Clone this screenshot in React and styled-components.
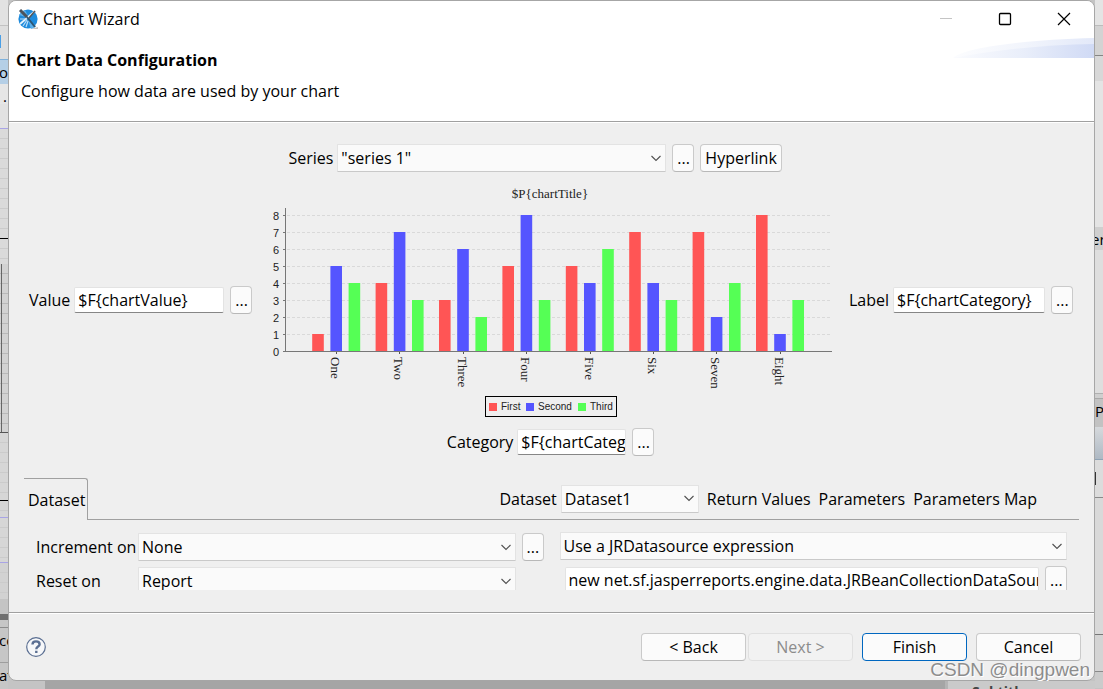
import { useState } from "react";
import styled, { createGlobalStyle, css } from "styled-components";

const GlobalStyle = createGlobalStyle`
  * {
    box-sizing: border-box;
  }
  body {
    margin: 0;
    background: #b4b4b4;
  }
  body, button, input, select {
    font-family: "Open Sans", "Noto Sans", "Noto Sans CJK SC", sans-serif;
    font-size: 16px;
    line-height: 24px;
    color: #000;
  }
`;

const categories = ["One", "Two", "Three", "Four", "Five", "Six", "Seven", "Eight"];
const series = [
  { name: "First", color: "#ff5555", values: [1, 4, 3, 5, 5, 7, 7, 8], legendX: 225 },
  { name: "Second", color: "#5555ff", values: [5, 7, 6, 8, 4, 4, 2, 1], legendX: 262 },
  { name: "Third", color: "#55ff55", values: [4, 3, 2, 3, 6, 3, 4, 3], legendX: 314 },
];

// slices of the editor that stay visible on both sides of the dialog
const leftSlices = [
  { h: 25, bg: "#e2e2e2" },
  { h: 10, bg: "#dedede", line: "#c2c2c2" },
  { h: 13, bg: "#dedede", mark: "#4a9fe6" },
  { h: 11, bg: "#dedede" },
  { h: 25, bg: "#b5cfe6", line: "#7fb2dd", text: "or" },
  { h: 20, bg: "#e6e6e6", text: " ." },
  { h: 24, bg: "#e2e2e2" },
  { h: 110, bg: "#dadada", line: "#a9a4e6", ruled: true },
  { h: 26, bg: "#dadada", line: "#000", ruled: true },
  { h: 168, bg: "#d2d2d2", axis: true, ruled: true },
  { h: 68, bg: "#d6d6d6", line: "#555", ruled: true },
  { h: 17, bg: "#d6d6d6", line: "#000", ruled: true },
  { h: 45, bg: "#d6d6d6", line: "#a9a4e6", ruled: true },
  { h: 37, bg: "#d2d2d2", line: "#a9a4e6", ruled: true },
  { h: 15, bg: "#c4c4c4" },
  { h: 6, bg: "#707070" },
  { h: 7, bg: "#c6c6c6" },
  { h: 35, bg: "#c6c6c6", line: "#8c8c8c", text: "co" },
  { h: 27, bg: "#c6c6c6", line: "#9e9e9e", text: "at" },
];

const rightSlices = [
  { h: 25, bg: "#e4e4e4" },
  { h: 30, bg: "#d3d3d3", line: "#bcbcbc" },
  { h: 26, bg: "#d8d8d8", line: "#858585" },
  { h: 146, bg: "#e4e4e4" },
  { h: 23, bg: "#cfcfcf", text: "er" },
  { h: 143, bg: "#dedede" },
  { h: 5, bg: "#cfcfcf", line: "#b0b0b0" },
  { h: 29, bg: "#c2c2c2", line: "#a8a8a8", text: " P" },
  { h: 32, bg: "linear-gradient(#d6d9dc, #aeb9c4)" },
  { h: 13, bg: "#dcdcdc", line: "#8fa3b5" },
  { h: 13, bg: "#dcdcdc", mark: "#333" },
  { h: 12, bg: "#dcdcdc" },
  { h: 137, bg: "#d9d9d9", line: "#8a8a8a" },
  { h: 37, bg: "#d4d4d4", line: "#777" },
  { h: 17, bg: "#cbcbcb", line: "#8a8a8a" },
];

function Gutter({ slices, right }) {
  return (
    <GutterStyled aria-hidden="true" $right={right}>
      {slices.map((slice, index) => (
        <Slice
          key={index}
          $h={slice.h}
          $bg={slice.bg}
          $line={slice.line}
          $mark={slice.mark}
          $axis={slice.axis}
          $ruled={slice.ruled}
        >
          {slice.text}
        </Slice>
      ))}
    </GutterStyled>
  );
}

function Select({ id, options }) {
  return (
    <SelectStyled>
      <select id={id} aria-label={id}>
        {options.map((option) => (
          <option key={option}>{option}</option>
        ))}
      </select>
      <svg width="12" height="7" viewBox="0 0 12 7" fill="none" stroke="#505050" strokeWidth="1.1">
        <path d="M1.500 1l4.500 4.500L10.500 1" />
      </svg>
    </SelectStyled>
  );
}

function Logo() {
  return (
    <svg width="20" height="20" viewBox="0 0 20 20">
      <path d="M13 20l7-2v2z" fill="#c9c3bd" />
      <circle cx="10" cy="10" r="9.6" fill="#1e8bdc" />
      <path d="M1 6a10 10 0 0 1 6-5l4 8zM10 11l8 6a10 10 0 0 1-5 3z" fill="#5bb0ec" />
      <path d="M2 15L17 2" stroke="#e8f3fb" strokeWidth="1.8" />
      <path d="M2 10l7 0M5 17l4-6M8 18l2-6" stroke="#b9defa" strokeWidth="1.2" />
      <path d="M2 1l7 7" stroke="#4b535b" strokeWidth="3" />
      <path d="M9 8l8 10" stroke="#2e5673" strokeWidth="2" />
      <path d="M11 9l6-7" stroke="#515558" strokeWidth="1.6" />
    </svg>
  );
}

function Chart() {
  const base = 179;
  const unit = 17;
  const step = 63.4;
  return (
    <svg width="573" height="256" viewBox="0 0 573 256" role="img" aria-label="Bar chart">
      <ChartText x="286" y="26" textAnchor="middle" $serif>
        $P{"{chartTitle}"}
      </ChartText>
      {[0, 1, 2, 3, 4, 5, 6, 7, 8].map((tick) => {
        const y = base - tick * unit + 0.5;
        return (
          <g key={tick}>
            {tick > 0 && (
              <path d={`M23 ${y}H568`} stroke="#d9d9d9" strokeDasharray="3 2" />
            )}
            <path d={`M19 ${y}h3`} stroke="#777" />
            <ChartText x="15" y={y + 4} textAnchor="end">
              {tick}
            </ChartText>
          </g>
        );
      })}
      {series.map((serie, s) =>
        serie.values.map((value, i) => (
          <rect
            key={serie.name + i}
            x={48.2 + i * step + s * 18.2}
            y={base - value * unit}
            width="11.6"
            height={value * unit}
            fill={serie.color}
          />
        ))
      )}
      <path d="M21.5 36v143.500H568" fill="none" stroke="#777" />
      {categories.map((name, i) => {
        const x = Math.round(72 + i * step);
        return (
          <g key={name}>
            <path d={`M${x + 0.5} 180v2`} stroke="#555" />
            <ChartText transform={`translate(${x - 5} 185) rotate(90)`} $serif>
              {name}
            </ChartText>
          </g>
        );
      })}
      <rect x="221.500" y="224.500" width="131" height="20" fill="none" stroke="#000" />
      {series.map((serie) => (
        <g key={serie.name}>
          <rect x={serie.legendX} y="231" width="8" height="8" fill={serie.color} />
          <ChartText x={serie.legendX + 12} y="238" $small>
            {serie.name}
          </ChartText>
        </g>
      ))}
    </svg>
  );
}

function ExpressionField({ label, value, width }) {
  const [text, setText] = useState(value);
  return (
    <Field>
      <label htmlFor={label}>{label}</label>
      <TextBox id={label} $width={width} value={text} onChange={(e) => setText(e.target.value)} />
      <Button $dots>...</Button>
    </Field>
  );
}

export default function App() {
  const [expression, setExpression] = useState(
    "new net.sf.jasperreports.engine.data.JRBeanCollectionDataSource"
  );

  return (
    <Desktop>
      <GlobalStyle />
      <Gutter slices={leftSlices} />
      <Dialog>
        <TitleBar>
          <Logo />
          <span>Chart Wizard</span>
          <WindowButton aria-label="Minimize" disabled>
            <svg width="14" height="14" viewBox="0 0 14 14" stroke="#c4c4c4">
              <path d="M1 6.500h12" />
            </svg>
          </WindowButton>
          <WindowButton aria-label="Maximize">
            <svg width="14" height="14" viewBox="0 0 14 14" fill="none" stroke="#000" strokeWidth="1.300">
              <rect x="1.500" y="1.500" width="11" height="11" rx="1" />
            </svg>
          </WindowButton>
          <WindowButton aria-label="Close">
            <svg width="14" height="14" viewBox="0 0 14 14" stroke="#000" strokeWidth="1.200">
              <path d="M1 1l12 12M13 1L1 13" />
            </svg>
          </WindowButton>
        </TitleBar>
        <Header>
          <h1>Chart Data Configuration</h1>
          <p>Configure how data are used by your chart</p>
          <Swoosh width="141" height="20" viewBox="0 0 141 20">
            <defs>
              <linearGradient id="swoosh">
                <stop offset="0" stopColor="#fafbfe" />
                <stop offset="0.500" stopColor="#e9eefa" />
                <stop offset="1" stopColor="#d0daf5" />
              </linearGradient>
            </defs>
            <path d="M0 20C12 9 72 2 141 0v20z" fill="url(#swoosh)" opacity="0.600" />
            <path d="M0 20C40 12 90 7 141 6v14z" fill="url(#swoosh)" />
          </Swoosh>
        </Header>

        <ChartArea>
          <ExpressionField label="Value" value="$F{chartValue}" width={150} />
          <ChartColumn>
            <Field className="series">
              <label htmlFor="series">Series</label>
              <SeriesSelect>
                <Select id="series" options={['"series 1"']} />
              </SeriesSelect>
              <Button $dots>...</Button>
              <Button>Hyperlink</Button>
            </Field>
            <Chart />
            <ExpressionField label="Category" value="$F{chartCategory}" width={109} />
          </ChartColumn>
          <ExpressionField label="Label" value="$F{chartCategory}" width={152} />
        </ChartArea>

        <TabBar>
          <Tab>Dataset</Tab>
          <ToolBar>
            <Field>
              <label htmlFor="dataset">Dataset</label>
              <DatasetSelect>
                <Select id="dataset" options={["Dataset1"]} />
              </DatasetSelect>
            </Field>
            <ToolButton>Return Values</ToolButton>
            <ToolButton>Parameters</ToolButton>
            <ToolButton>Parameters Map</ToolButton>
          </ToolBar>
        </TabBar>
        <Panel>
          <OptionGrid>
            <label htmlFor="increment">Increment on</label>
            <Select id="increment" options={["None", "Report"]} />
            <Button $dots>...</Button>
            <label htmlFor="reset">Reset on</label>
            <Select id="reset" options={["Report", "None"]} />
          </OptionGrid>
          <Source>
            <Select id="source" options={["Use a JRDatasource expression"]} />
            <Field>
              <TextBox
                aria-label="Datasource expression"
                $grow
                value={expression}
                onChange={(e) => setExpression(e.target.value)}
              />
              <Button $dots>...</Button>
            </Field>
          </Source>
        </Panel>

        <Footer>
          <HelpButton aria-label="Help">
            <svg width="20" height="20" viewBox="0 0 20 20" fill="none" stroke="#5b6f92">
              <circle cx="10" cy="10" r="9.300" fill="#f6f7f9" strokeWidth="1.200" />
              <path d="M6.500 7.600C6.500 5.300 8 4.400 10 4.400s3.600 1.100 3.600 3c0 2.200-3.300 2.200-3.300 4.800" strokeWidth="2.400" />
              <path d="M10.300 13.800v2.200" strokeWidth="2.400" />
            </svg>
          </HelpButton>
          <Steps>
            <Button $wide>&lt; Back</Button>
            <Button $wide disabled>
              Next &gt;
            </Button>
          </Steps>
          <Button $wide $primary>
            Finish
          </Button>
          <Button $wide>Cancel</Button>
        </Footer>
      </Dialog>
      <Gutter slices={rightSlices} right />
      <BottomStrip aria-hidden="true">
        <span>Subtitle</span>
      </BottomStrip>
      <Watermark>CSDN @dingpwen</Watermark>
    </Desktop>
  );
}

const Desktop = styled.div`
  position: relative;
  display: grid;
  grid-template-columns: 8px 1fr 8px;
  grid-template-rows: auto 8px;
  background: #c4c4c4;
`;

const GutterStyled = styled.div`
  grid-row: 1 / 3;
  grid-column: ${(props) => (props.$right ? 3 : 1)};
  display: flex;
  flex-direction: column;
  overflow: hidden;
  text-indent: ${(props) => (props.$right ? -4 : -1)}px;
`;

const Slice = styled.div`
  flex: 0 0 ${(props) => props.$h}px;
  overflow: hidden;
  white-space: pre;
  font-size: 15px;
  background: ${(props) => props.$bg};
  border-top: ${(props) => (props.$line ? `1px solid ${props.$line}` : "none")};
  ${(props) =>
    props.$ruled &&
    css`
      background: repeating-linear-gradient(${props.$bg} 0 9px, #cbcbcb 9px 10px);
    `}
  ${(props) =>
    props.$mark &&
    css`
      border-left: 1px solid ${props.$mark};
    `}
  ${(props) =>
    props.$axis &&
    css`
      background: linear-gradient(90deg, transparent 1px, #666 1px 2px, transparent 2px),
        repeating-linear-gradient(${props.$bg} 0 9px, #b9b9b9 9px 10px);
    `}
`;

const Dialog = styled.main`
  grid-row: 1;
  grid-column: 2;
  min-width: 0;
  background: #efefef;
  border: 1px solid #a6a6a6;
  border-radius: 8px;
  overflow: hidden;
`;

const TitleBar = styled.div`
  display: flex;
  align-items: center;
  height: 36px;
  padding: 0 1px 0 9px;
  background: #fff;
  span {
    flex: 1;
    margin-left: 5px;
  }
`;

const WindowButton = styled.button`
  display: grid;
  place-items: center;
  width: 59px;
  height: 36px;
  padding: 0;
  border: 0;
  background: none;
`;

const Header = styled.header`
  position: relative;
  padding: 11px 7px 18px;
  background: #fff;
  border-bottom: 1px solid #a0a0a0;
  h1 {
    margin: 0;
    font-size: 16px;
    font-weight: 700;
  }
  p {
    margin: 7px 5px 0;
  }
`;

const Swoosh = styled.svg`
  position: absolute;
  top: 1px;
  right: 0;
`;

const ChartArea = styled.section`
  display: flex;
  align-items: center;
  justify-content: space-between;
  padding: 21px 21px 22px 20px;
  border-top: 1px solid #fff;
`;

const ChartColumn = styled.div`
  display: flex;
  flex-direction: column;
  align-items: center;
  .series {
    padding-right: 31px;
  }
`;

const ChartText = styled.text`
  font-family: ${(props) =>
    props.$serif ? '"Liberation Serif", serif' : '"Liberation Sans", sans-serif'};
  font-size: ${(props) => (props.$serif ? 13 : props.$small ? 10 : 11)}px;
  fill: #222;
`;

const Field = styled.div`
  display: flex;
  align-items: center;
  gap: 6px;
  height: 28px;
  white-space: nowrap;
  label {
    margin-right: -2px;
  }
`;

const TextBox = styled.input`
  width: ${(props) => props.$width}px;
  flex: ${(props) => (props.$grow ? "1" : "none")};
  min-width: 0;
  height: 26px;
  padding: 0 0 0 3px;
  border: 1px solid #e3e3e3;
  border-bottom-color: #868686;
  border-radius: 2px;
  background: #fff;
  outline: none;
`;

const Button = styled.button`
  height: 28px;
  padding: 0 4px;
  border: 1px solid #cacaca;
  border-bottom-color: #b8b8b8;
  border-radius: 4px;
  background: #fbfbfb;
  ${(props) =>
    props.$dots &&
    css`
      flex: none;
      width: 22px;
    `}
  ${(props) =>
    props.$wide &&
    css`
      width: 105px;
    `}
  ${(props) =>
    props.$primary &&
    css`
      border-color: #0067c0;
    `}
  &:disabled {
    color: #8c8c8c;
    background: #f2f2f2;
    border-color: #e0e0e0;
  }
`;

const SelectStyled = styled.div`
  display: grid;
  align-items: center;
  min-width: 0;
  select {
    grid-area: 1 / 1;
    width: 100%;
    height: 28px;
    padding: 0 20px 0 3px;
    appearance: none;
    border: 1px solid #e3e3e3;
    border-bottom-color: #c9c9c9;
    border-radius: 1px;
    background: #fafafa;
    outline: none;
  }
  svg {
    grid-area: 1 / 1;
    justify-self: end;
    margin-right: 4px;
    pointer-events: none;
  }
`;

const SeriesSelect = styled.div`
  width: 329px;
`;

const DatasetSelect = styled.div`
  width: 138px;
`;

const TabBar = styled.div`
  display: flex;
  height: 42px;
  margin: 0 15px;
`;

const Tab = styled.button`
  padding: 0 2px 0 4px;
  border: 0;
  border-top: 1px solid #a0a0a0;
  border-right: 1px solid #a0a0a0;
  border-top-right-radius: 3px;
  background: none;
`;

const ToolBar = styled.div`
  flex: 1;
  display: flex;
  align-items: center;
  justify-content: flex-end;
  gap: 8px;
  padding-right: 42px;
  border-bottom: 1px solid #a0a0a0;
`;

const ToolButton = styled.button`
  padding: 0;
  border: 0;
  background: none;
`;

/* the last row is cut by the bottom of the panel */
const Panel = styled.div`
  display: grid;
  grid-template-columns: 1fr 1fr;
  gap: 16px;
  height: 70px;
  margin: 0 27px 22px;
  overflow: hidden;
`;

const OptionGrid = styled.div`
  display: grid;
  grid-template-columns: 96px 1fr 22px;
  grid-auto-rows: 28px;
  gap: 6px;
  align-items: center;
  padding-top: 13px;
  white-space: nowrap;
`;

const Source = styled.div`
  display: flex;
  flex-direction: column;
  gap: 6px;
  min-width: 0;
  padding-top: 12px;
  ${Field} {
    padding-left: 5px;
  }
`;

const Footer = styled.footer`
  display: flex;
  align-items: center;
  gap: 9px;
  padding: 20px 13px 19px 17px;
  border-top: 1px solid #a0a0a0;
  box-shadow: inset 0 1px #fff;
`;

const HelpButton = styled.button`
  display: flex;
  margin-right: auto;
  padding: 0;
  border: 0;
  background: none;
`;

const Steps = styled.div`
  display: flex;
  gap: 2px;
`;

const BottomStrip = styled.div`
  grid-row: 2;
  grid-column: 2;
  display: flex;
  justify-content: flex-end;
  overflow: hidden;
  margin-left: 37px;
  background: #a5a5a5;
  span {
    width: 150px;
    padding: 3px 0 0 24px;
    border-left: 3px solid #b4b4b4;
    background: #cacaca;
    color: #444;
    font-weight: 700;
    font-size: 14px;
    line-height: 16px;
  }
`;

const Watermark = styled.div`
  position: absolute;
  right: 13px;
  bottom: 7px;
  font-family: "Liberation Sans", Arial, sans-serif;
  font-size: 19px;
  color: #8d8d8d;
  text-shadow: 1px 1px #fff;
  pointer-events: none;
`;
